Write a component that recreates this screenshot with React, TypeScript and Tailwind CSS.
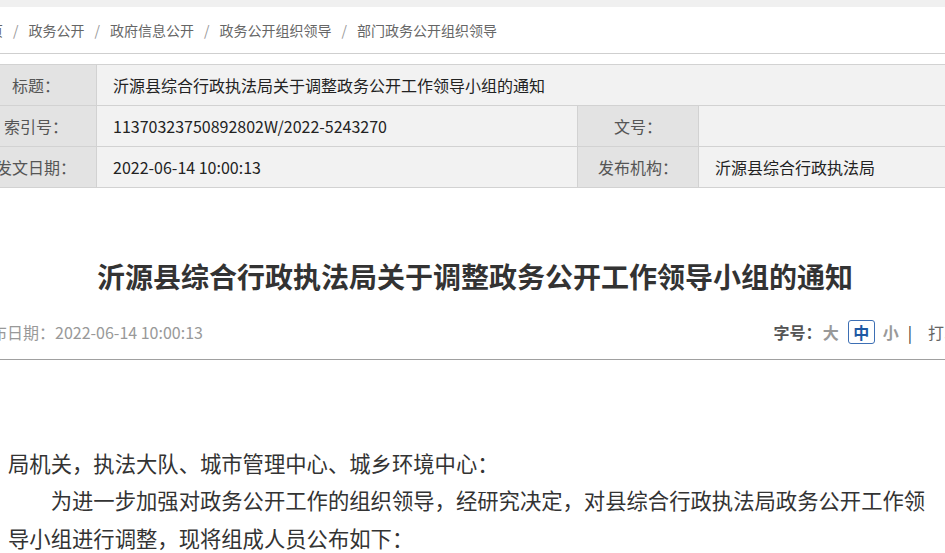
export default function App() {
  const crumbs = ['首页', '政务公开', '政府信息公开', '政务公开组织领导', '部门政务公开组织领导']
  const title = '沂源县综合行政执法局关于调整政务公开工作领导小组的通知'

  return (
    <div className="min-h-[553px] overflow-hidden bg-white font-['Noto_Sans_CJK_SC',sans-serif]">
      <div className="h-[7px] bg-[#f0f0f0]" />
      <div className="ml-[-25px] w-[1000px]">
        <nav className="flex h-[47px] items-center border-b border-[#cfcfcf] text-[14px] text-[#666]">
          {crumbs.map((c, i) => (
            <span key={c} className="flex items-center">
              {i > 0 && <span className="px-[10px] text-[#999]">/</span>}
              <span>{c}</span>
            </span>
          ))}
        </nav>

        <table className="mt-[10px] w-full table-fixed border-collapse text-[16px]">
          <colgroup>
            <col className="w-[121px]" />
            <col className="w-[481px]" />
            <col className="w-[121px]" />
            <col />
          </colgroup>
          <tbody>
            <tr className="h-[41px]">
              <td className="border border-[#d2d2d2] bg-[#e3e3e3] text-center text-[#555]">标题：</td>
              <td colSpan={3} className="border border-[#d2d2d2] bg-[#f2f2f2] pl-[16px] text-[#222]">
                {title}
              </td>
            </tr>
            <tr className="h-[41px]">
              <td className="border border-[#d2d2d2] bg-[#e3e3e3] text-center text-[#555]">索引号：</td>
              <td className="border border-[#d2d2d2] bg-[#f2f2f2] pl-[16px] text-[#222]">
                11370323750892802W/2022-5243270
              </td>
              <td className="border border-[#d2d2d2] bg-[#e3e3e3] text-center text-[#555]">文号：</td>
              <td className="border border-[#d2d2d2] bg-[#f2f2f2] pl-[16px] text-[#222]" />
            </tr>
            <tr className="h-[41px]">
              <td className="border border-[#d2d2d2] bg-[#e3e3e3] text-center text-[#555]">发文日期：</td>
              <td className="border border-[#d2d2d2] bg-[#f2f2f2] pl-[16px] text-[#222]">2022-06-14 10:00:13</td>
              <td className="border border-[#d2d2d2] bg-[#e3e3e3] text-center text-[#555]">发布机构：</td>
              <td className="border border-[#d2d2d2] bg-[#f2f2f2] pl-[16px] text-[#222]">沂源县综合行政执法局</td>
            </tr>
          </tbody>
        </table>

        <h1 className="mt-[70px] text-center text-[28px] font-bold leading-[36px] text-[#333]">{title}</h1>

        <div className="mt-[18px] flex h-[48px] items-center justify-between border-b border-[#a0a0a0] pb-[8px] text-[16px]">
          <span className="text-[#999]">发布日期：2022-06-14 10:00:13</span>
          <div className="flex items-center pr-[15px]">
            <span className="font-bold text-[#555]">字号：</span>
            <span className="ml-[1px] font-bold text-[#999] text-[16px]">大</span>
            <span className="ml-[9px] flex h-[24px] w-[27px] items-center justify-center rounded-[3px] border border-[#3d6fb4] text-[16px] font-bold text-[#1d58a3]">
              中
            </span>
            <span className="ml-[8px] font-bold text-[#999] text-[16px]">小</span>
            <span className="ml-[9px] text-[#333]">|</span>
            <span className="ml-[16px] text-[#666]">打印</span>
          </div>
        </div>

        <div className="pt-[84px] pl-[33px] pr-[40px] text-[21.33px] leading-[37.33px] text-[#333]">
          <p>局机关，执法大队、城市管理中心、城乡环境中心：</p>
          <p className="indent-[2em]">
            为进一步加强对政务公开工作的组织领导，经研究决定，对县综合行政执法局政务公开工作领导小组进行调整，现将组成人员公布如下：
          </p>
        </div>
      </div>
    </div>
  )
}
